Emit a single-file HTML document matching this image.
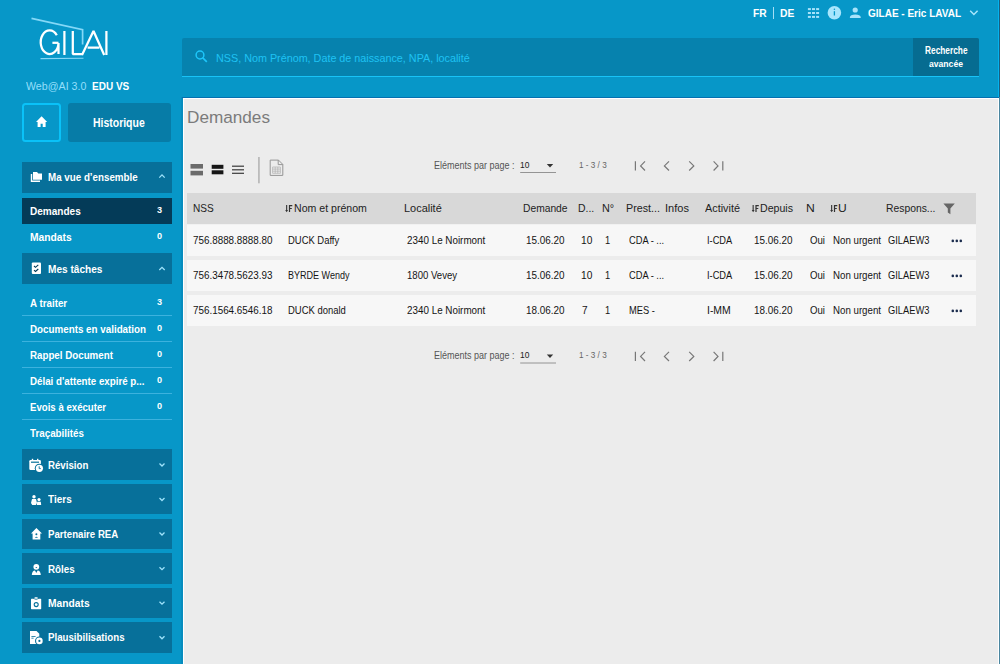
<!DOCTYPE html>
<html><head><meta charset="utf-8"><title>GILAI - Demandes</title>
<style>
*{margin:0;padding:0;box-sizing:border-box}
html,body{width:1000px;height:664px;overflow:hidden}
body{position:relative;background:#0797c8;font-family:"Liberation Sans",sans-serif}
.a{position:absolute}
.t{position:absolute;white-space:nowrap;line-height:1;transform-origin:0 0}
svg{position:absolute;overflow:visible}
</style></head><body>
<!-- content area -->
<div class="a" style="left:181px;top:97px;width:2px;height:567px;background:#078cbe"></div><div class="a" style="left:182px;top:97px;width:818px;height:1px;background:#0570b0"></div>
<div class="a" style="left:183px;top:98px;width:816px;height:566px;background:#fff"></div>
<div class="a" style="left:184px;top:99px;width:814px;height:565px;background:#ececec"></div>
<div class="a" style="left:998px;top:0;width:1px;height:97px;background:#05b2ee"></div>
<div class="a" style="left:999px;top:0;width:1px;height:97px;background:#1a5f80"></div><div class="a" style="left:999px;top:97px;width:1px;height:567px;background:#4a86a0"></div>

<!-- logo -->
<svg style="left:0;top:0" width="120" height="70" viewBox="0 0 120 70">
 <g fill="none" stroke="#84d8f7" stroke-width="1.7">
  <path d="M31.5 18.4 L82.6 29.7 L82.6 44.5"/>
 </g>
 <path d="M40.5 58.6 L83.5 58.3" fill="none" stroke="#86d8f6" stroke-width="1.1"/>
 <g fill="none" stroke="#fff" stroke-width="2.25" stroke-linejoin="bevel">
  <path d="M56.8 35.3 A8.9 11.8 0 1 0 58.5 43 V54"/>
  <path d="M52.4 42.8 H58.5"/>
  <path d="M64.4 31 V55"/>
  <path d="M72.8 31 V54 H82.6"/>
  <path d="M82 55 L93.5 31 L104.2 55 M87.6 47.6 H99.4"/>
  <path d="M106.4 31 V55"/>
 </g>
</svg>

<!-- home button -->
<div class="a" style="left:22px;top:103px;width:39px;height:39px;border:2px solid #0ac2f8;border-radius:3.5px"></div>
<svg style="left:0;top:0" width="60" height="140" viewBox="0 0 60 140"><path d="M41.6 116.3 L47.2 121.9 H45.6 V127 H42.7 V123.8 H40.6 V127 H37.6 V121.9 H36 Z" fill="#fff"/></svg>
<div class="a" style="left:68px;top:103px;width:103px;height:38.5px;background:#077ca7;border-radius:3px"></div>

<!-- sidebar sections -->
<div class="a" style="left:22px;top:161.5px;width:150px;height:31.3px;background:#07709a"></div>
<div class="a" style="left:22px;top:198px;width:150px;height:26px;background:#043b58"></div>
<div class="a" style="left:22px;top:253.4px;width:150px;height:30.8px;background:#07709a"></div>
<div class="a" style="left:22px;top:315px;width:150px;height:1px;background:#3cb2de"></div>
<div class="a" style="left:22px;top:341px;width:150px;height:1px;background:#3cb2de"></div>
<div class="a" style="left:22px;top:367px;width:150px;height:1px;background:#3cb2de"></div>
<div class="a" style="left:22px;top:393px;width:150px;height:1px;background:#3cb2de"></div>
<div class="a" style="left:22px;top:419px;width:150px;height:1px;background:#3cb2de"></div>
<div class="a" style="left:22px;top:449.4px;width:150px;height:30.4px;background:#07709a"></div>
<div class="a" style="left:22px;top:484px;width:150px;height:30.4px;background:#07709a"></div>
<div class="a" style="left:22px;top:518.6px;width:150px;height:30.4px;background:#07709a"></div>
<div class="a" style="left:22px;top:553.1px;width:150px;height:30.6px;background:#07709a"></div>
<div class="a" style="left:22px;top:587.6px;width:150px;height:30.4px;background:#07709a"></div>
<div class="a" style="left:22px;top:622.2px;width:150px;height:30.4px;background:#07709a"></div>

<!-- chevrons -->
<svg style="left:0;top:0" width="180" height="664" viewBox="0 0 180 664">
 <g fill="none" stroke="#9fe3fb" stroke-width="1.3">
  <path d="M159.3 177.6 L162 174.9 L164.7 177.6"/>
  <path d="M159.3 270 L162 267.3 L164.7 270"/>
  <path d="M159.5 463.5 L162 466 L164.5 463.5"/>
  <path d="M159.5 498 L162 500.5 L164.5 498"/>
  <path d="M159.5 532.5 L162 535 L164.5 532.5"/>
  <path d="M159.5 567.2 L162 569.7 L164.5 567.2"/>
  <path d="M159.5 601.7 L162 604.2 L164.5 601.7"/>
  <path d="M159.5 636.3 L162 638.8 L164.5 636.3"/>
 </g>
 <!-- folder -->
 <g fill="#fff">
  <path d="M30.8 174 H32.2 V180.6 H40 V182 H30.8 Z"/>
  <path d="M33 172 H37 L38.3 173.6 H42 V179.7 H33 Z"/>
 </g>
 <!-- checklist -->
 <rect x="31.8" y="262.6" width="9.2" height="11.4" rx="1" fill="#fff"/>
 <g fill="none" stroke="#043b58" stroke-width="1.1">
  <path d="M34 266 L35.5 267.3 L38.3 264.8"/>
  <path d="M34 270.2 L35.5 271.5 L38.3 269"/>
 </g>
 <!-- calendar -->
 <g fill="#fff">
  <rect x="29.3" y="460" width="11.6" height="10" rx="1.2"/>
  <rect x="31.8" y="458.8" width="1.4" height="2"/>
  <rect x="37" y="458.8" width="1.4" height="2"/>
 </g>
 <rect x="31" y="461.6" width="8" height="1.2" fill="#07709a"/>
 <circle cx="39.4" cy="468.3" r="4.6" fill="#07709a"/>
 <circle cx="39.4" cy="468.3" r="3.6" fill="#fff"/>
 <path d="M39.2 466.3 V468.6 H40.8" fill="none" stroke="#07709a" stroke-width="0.9"/>
 <!-- tiers -->
 <g fill="#fff">
  <circle cx="34" cy="496.8" r="1.7"/>
  <path d="M32 499 H36 L37 503 L35.8 505 H32.2 L31 503 Z"/>
  <circle cx="39" cy="499.6" r="1.6"/>
  <path d="M37.2 501.8 H40.8 L41.2 505 H36.8 Z"/>
 </g>
 <!-- house -->
 <path d="M36.4 528 L42 533.6 H40.3 V539.6 H32.6 V533.6 H31 Z" fill="#fff"/>
 <circle cx="36.4" cy="534.3" r="1" fill="#07709a"/>
 <path d="M34.8 537.8 Q36.4 535.5 38 537.8 Z" fill="#07709a"/>
 <!-- roles -->
 <circle cx="36.3" cy="566.8" r="2.9" fill="#fff"/>
 <path d="M35.3 567 H37.3 L36.3 568.2 Z" fill="#07709a"/>
 <path d="M31.8 575 Q32 570.6 35 570.4 L36.3 573 L37.6 570.4 Q40.6 570.6 40.8 575 Z" fill="#fff"/>
 <!-- clipboard -->
 <rect x="31" y="598.8" width="10.2" height="10.4" rx="0.6" fill="#fff"/>
 <path d="M33.5 598.8 L35 597.2 H37.2 L38.7 598.8 Z" fill="#fff"/>
 <path d="M33.2 598.3 Q36.1 600.8 39 598.3" fill="none" stroke="#07709a" stroke-width="0.7"/>
 <circle cx="36.2" cy="604.6" r="2" fill="none" stroke="#07709a" stroke-width="1.1"/>
 <!-- plausibilisations -->
 <path d="M30 631 H36.5 L39.3 633.8 V644 H30 Z" fill="#fff"/>
 <path d="M31.4 636.5 H35.6 M31.4 638.2 H33.6" stroke="#07709a" stroke-width="0.8"/>
 <circle cx="39.4" cy="640.9" r="4.4" fill="#07709a"/>
 <circle cx="39.4" cy="640.9" r="3.3" fill="#fff"/>
 <circle cx="39.4" cy="640.9" r="1.1" fill="#07709a"/>
</svg>

<!-- search bar -->
<div class="a" style="left:182px;top:37.5px;width:797px;height:38.5px;background:#0682ae;border-radius:2px 2px 0 0"></div>
<div class="a" style="left:913px;top:37.7px;width:65.6px;height:38px;background:#066c91;border-radius:0 2px 0 0"></div>
<div class="a" style="left:182px;top:75.5px;width:797px;height:1.6px;background:#18c3f7"></div>
<svg style="left:193.5px;top:48.7px" width="15" height="15" viewBox="0 0 15 15"><circle cx="6" cy="6" r="3.9" fill="none" stroke="#1ec6fa" stroke-width="1.5"/><path d="M8.8 8.8 L12.8 12.8" stroke="#1ec6fa" stroke-width="1.7"/></svg>

<!-- top right icons -->
<div class="a" style="left:773px;top:6.5px;width:1px;height:12.4px;background:#a4def5"></div>
<svg style="left:0;top:0" width="1000" height="30" viewBox="0 0 1000 30">
 <g fill="#a8e3fa">
  <rect x="807.9" y="8.1" width="3" height="2"/><rect x="812" y="8.1" width="3" height="2"/><rect x="816.1" y="8.1" width="3" height="2"/>
  <rect x="807.9" y="12" width="3" height="2"/><rect x="812" y="12" width="3" height="2"/><rect x="816.1" y="12" width="3" height="2"/>
  <rect x="807.9" y="15.9" width="3" height="2"/><rect x="812" y="15.9" width="3" height="2"/><rect x="816.1" y="15.9" width="3" height="2"/>
 </g>
 <circle cx="834.4" cy="12.7" r="6.8" fill="#a8e6fd"/>
 <rect x="833.75" y="11.2" width="1.3" height="4.3" fill="#0797c8"/>
 <circle cx="834.4" cy="9.3" r="0.8" fill="#0797c8"/>
 <g fill="#a8e3fa">
  <circle cx="855.2" cy="10" r="2.6"/>
  <path d="M849.9 18.1 V17 Q850.2 14.5 855.3 14.5 Q860.4 14.5 860.7 17 V18.1 Z"/>
 </g>
 <path d="M970.2 10.8 L973.9 14.5 L977.6 10.8" fill="none" stroke="#a8e6fc" stroke-width="1.5"/>
</svg>

<!-- toolbar -->
<svg style="left:0;top:0" width="1000" height="664" viewBox="0 0 1000 664">
 <rect x="190.5" y="164" width="12.5" height="4.6" fill="#6b6b6b"/>
 <rect x="190.5" y="170.8" width="12.5" height="4.6" fill="#6b6b6b"/>
 <rect x="211.7" y="164.8" width="11.7" height="4" fill="#161616"/>
 <rect x="211.7" y="170.3" width="11.7" height="4" fill="#161616"/>
 <rect x="232" y="165.6" width="12" height="1.2" fill="#3a3a3a"/>
 <rect x="232" y="169.2" width="12" height="1.2" fill="#3a3a3a"/>
 <rect x="232" y="172.7" width="12" height="1.2" fill="#3a3a3a"/>
 <rect x="258.5" y="157" width="0.9" height="26.3" fill="#8a8a8a"/>
 <path d="M270.2 160.1 H278.5 L282.8 164.4 V175.4 H270.2 Z M278.2 160.1 V164.6 H282.8" fill="none" stroke="#959595" stroke-width="1"/>
 <path d="M272.6 167 H280.4 V173.3 H272.6 Z M272.6 169.1 H280.4 M272.6 171.2 H280.4 M275.2 167 V173.3 M277.8 167 V173.3" fill="none" stroke="#b0b0b0" stroke-width="0.7"/>
</svg>

<!-- paginators -->
<svg style="left:0;top:0" width="1000" height="664" viewBox="0 0 1000 664">
 <g>
 <path d="M520.2 172.5 H556" stroke="#8a8a8a" stroke-width="0.9"/>
 <path d="M546.8 164 H553.2 L550 167.5 Z" fill="#333"/>
 <g fill="none" stroke="#777" stroke-width="1.2">
  <path d="M635.4 161.3 V170.5 M645 161.3 L640.6 165.9 L645 170.5"/>
  <path d="M669 161.3 L664.4 165.9 L669 170.5"/>
  <path d="M689.2 161.3 L693.8 165.9 L689.2 170.5"/>
  <path d="M713.6 161.3 L718 165.9 L713.6 170.5 M722.8 161.3 V170.5"/>
 </g>
 </g>
 <g transform="translate(0 190.5)">
 <path d="M520.2 172.5 H556" stroke="#8a8a8a" stroke-width="0.9"/>
 <path d="M546.8 164 H553.2 L550 167.5 Z" fill="#333"/>
 <g fill="none" stroke="#777" stroke-width="1.2">
  <path d="M635.4 161.3 V170.5 M645 161.3 L640.6 165.9 L645 170.5"/>
  <path d="M669 161.3 L664.4 165.9 L669 170.5"/>
  <path d="M689.2 161.3 L693.8 165.9 L689.2 170.5"/>
  <path d="M713.6 161.3 L718 165.9 L713.6 170.5 M722.8 161.3 V170.5"/>
 </g>
 </g>

</svg>

<!-- table -->
<div class="a" style="left:186.5px;top:193px;width:789.5px;height:33px;background:#f1f1f1"></div><div class="a" style="left:186.5px;top:193px;width:789.5px;height:31.3px;background:#d8d8d8"></div>
<div class="a" style="left:186.5px;top:225.3px;width:789.5px;height:30.6px;background:#f7f7f7"></div>
<div class="a" style="left:186.5px;top:260px;width:789.5px;height:30.5px;background:#f7f7f7"></div>
<div class="a" style="left:186.5px;top:294.6px;width:789.5px;height:31.2px;background:#f7f7f7"></div>
<svg style="left:0;top:0" width="1000" height="664" viewBox="0 0 1000 664">
 <g fill="#333">
  <path d="M286.1 205 H287.2 V210.4 H286.1 Z M285.2 209.9 H288.1 L286.65 212.2 Z"/>
  <path d="M288.9 205 H292.3 V206.2 H290.1 V208 H291.8 V209.1 H290.1 V212 H288.9 Z"/>
 </g>
 <g fill="#333" transform="translate(466.5 0)">
  <path d="M286.1 205 H287.2 V210.4 H286.1 Z M285.2 209.9 H288.1 L286.65 212.2 Z"/>
  <path d="M288.9 205 H292.3 V206.2 H290.1 V208 H291.8 V209.1 H290.1 V212 H288.9 Z"/>
 </g>
 <g fill="#333" transform="translate(545 0)">
  <path d="M286.1 205 H287.2 V210.4 H286.1 Z M285.2 209.9 H288.1 L286.65 212.2 Z"/>
  <path d="M288.9 205 H292.3 V206.2 H290.1 V208 H291.8 V209.1 H290.1 V212 H288.9 Z"/>
 </g>
 <path d="M943.4 203.4 H954.8 L950.4 208.6 V214.2 L947.8 212.4 V208.6 Z" fill="#666"/>
 <g fill="#1a2b4d">
  <circle cx="952.8" cy="240.9" r="1.3"/><circle cx="956.8" cy="240.9" r="1.3"/><circle cx="960.8" cy="240.9" r="1.3"/>
  <circle cx="952.8" cy="275.9" r="1.3"/><circle cx="956.8" cy="275.9" r="1.3"/><circle cx="960.8" cy="275.9" r="1.3"/>
  <circle cx="952.8" cy="310.9" r="1.3"/><circle cx="956.8" cy="310.9" r="1.3"/><circle cx="960.8" cy="310.9" r="1.3"/>
 </g>
</svg>
<div class="t" id="t0" style="left:753.42px;top:7.93px;font-size:11.30px;font-weight:700;color:#ffffff;transform:scaleX(0.9071);">FR</div>
<div class="t" id="t1" style="left:780.12px;top:7.93px;font-size:11.30px;font-weight:700;color:#ffffff;transform:scaleX(0.9085);">DE</div>
<div class="t" id="t2" style="left:868.06px;top:7.93px;font-size:11.30px;font-weight:700;color:#ffffff;transform:scaleX(0.8854);">GILAE - Eric LAVAL</div>
<div class="t" id="t3" style="left:215.57px;top:52.69px;font-size:11.00px;font-weight:400;color:#1fc3f4;transform:scaleX(0.9796);">NSS, Nom Prénom, Date de naissance, NPA, localité</div>
<div class="t" id="t4" style="left:924.58px;top:45.53px;font-size:10.00px;font-weight:700;color:#ffffff;transform:scaleX(0.8317);">Recherche</div>
<div class="t" id="t5" style="left:928.78px;top:58.70px;font-size:9.80px;font-weight:700;color:#ffffff;transform:scaleX(0.8784);">avancée</div>
<div class="t" id="t6" style="left:25.60px;top:80.52px;font-size:11.20px;font-weight:400;color:#94dffb;transform:scaleX(0.9524);">Web@AI 3.0</div>
<div class="t" id="t7" style="left:92.13px;top:80.52px;font-size:11.20px;font-weight:700;color:#ffffff;transform:scaleX(0.8938);">EDU VS</div>
<div class="t" id="t8" style="left:93.36px;top:116.99px;font-size:12.30px;font-weight:700;color:#ffffff;transform:scaleX(0.8502);">Historique</div>
<div class="t" id="t9" style="left:48.17px;top:170.78px;font-size:11.60px;font-weight:700;color:#ffffff;transform:scaleX(0.8437);">Ma vue d’ensemble</div>
<div class="t" id="t10" style="left:29.85px;top:205.08px;font-size:11.60px;font-weight:700;color:#ffffff;transform:scaleX(0.8661);">Demandes</div>
<div class="t" id="t11" style="left:156.54px;top:206.23px;font-size:8.70px;font-weight:700;color:#ffffff;transform:scaleX(1.0500);">3</div>
<div class="t" id="t12" style="left:29.83px;top:231.08px;font-size:11.60px;font-weight:700;color:#ffffff;transform:scaleX(0.8870);">Mandats</div>
<div class="t" id="t13" style="left:156.54px;top:232.23px;font-size:8.70px;font-weight:700;color:#ffffff;transform:scaleX(1.0500);">0</div>
<div class="t" id="t14" style="left:48.15px;top:263.38px;font-size:11.60px;font-weight:700;color:#ffffff;transform:scaleX(0.8715);">Mes tâches</div>
<div class="t" id="t15" style="left:30.29px;top:296.88px;font-size:11.60px;font-weight:700;color:#ffffff;transform:scaleX(0.8434);">A traiter</div>
<div class="t" id="t16" style="left:156.74px;top:298.13px;font-size:8.70px;font-weight:700;color:#ffffff;transform:scaleX(1.0500);">3</div>
<div class="t" id="t17" style="left:29.87px;top:323.18px;font-size:11.60px;font-weight:700;color:#ffffff;transform:scaleX(0.8457);">Documents en validation</div>
<div class="t" id="t18" style="left:156.74px;top:324.13px;font-size:8.70px;font-weight:700;color:#ffffff;transform:scaleX(1.0500);">0</div>
<div class="t" id="t19" style="left:29.97px;top:349.18px;font-size:11.60px;font-weight:700;color:#ffffff;transform:scaleX(0.8409);">Rappel Document</div>
<div class="t" id="t20" style="left:156.74px;top:350.13px;font-size:8.70px;font-weight:700;color:#ffffff;transform:scaleX(1.0500);">0</div>
<div class="t" id="t21" style="left:29.97px;top:375.18px;font-size:11.60px;font-weight:700;color:#ffffff;transform:scaleX(0.8408);">Délai d&#x27;attente expiré p...</div>
<div class="t" id="t22" style="left:156.74px;top:376.13px;font-size:8.70px;font-weight:700;color:#ffffff;transform:scaleX(1.0500);">0</div>
<div class="t" id="t23" style="left:29.98px;top:401.18px;font-size:11.60px;font-weight:700;color:#ffffff;transform:scaleX(0.8309);">Evois à exécuter</div>
<div class="t" id="t24" style="left:156.74px;top:402.13px;font-size:8.70px;font-weight:700;color:#ffffff;transform:scaleX(1.0500);">0</div>
<div class="t" id="t25" style="left:29.90px;top:427.18px;font-size:11.60px;font-weight:700;color:#ffffff;transform:scaleX(0.8457);">Traçabilités</div>
<div class="t" id="t26" style="left:48.07px;top:458.78px;font-size:11.60px;font-weight:700;color:#ffffff;transform:scaleX(0.8340);">Révision</div>
<div class="t" id="t27" style="left:48.20px;top:493.38px;font-size:11.60px;font-weight:700;color:#ffffff;transform:scaleX(0.8624);">Tiers</div>
<div class="t" id="t28" style="left:48.08px;top:527.68px;font-size:11.60px;font-weight:700;color:#ffffff;transform:scaleX(0.8323);">Partenaire REA</div>
<div class="t" id="t29" style="left:48.07px;top:562.88px;font-size:11.60px;font-weight:700;color:#ffffff;transform:scaleX(0.8459);">Rôles</div>
<div class="t" id="t30" style="left:48.04px;top:597.08px;font-size:11.60px;font-weight:700;color:#ffffff;transform:scaleX(0.8848);">Mandats</div>
<div class="t" id="t31" style="left:48.07px;top:631.08px;font-size:11.60px;font-weight:700;color:#ffffff;transform:scaleX(0.8365);">Plausibilisations</div>
<div class="t" id="t32" style="left:187.15px;top:108.84px;font-size:17.20px;font-weight:400;color:#7b7b7b;transform:scaleX(0.9982);">Demandes</div>
<div class="t" id="t33" style="left:434.37px;top:159.54px;font-size:10.70px;font-weight:400;color:#555555;transform:scaleX(0.8415);">Eléments par page :</div>
<div class="t" id="t34" style="left:519.55px;top:159.90px;font-size:9.80px;font-weight:400;color:#222222;transform:scaleX(0.8615);">10</div>
<div class="t" id="t35" style="left:579.14px;top:160.55px;font-size:8.80px;font-weight:400;color:#666666;transform:scaleX(0.9276);">1 - 3 / 3</div>
<div class="t" id="t36" style="left:434.37px;top:350.04px;font-size:10.70px;font-weight:400;color:#555555;transform:scaleX(0.8415);">Eléments par page :</div>
<div class="t" id="t37" style="left:519.55px;top:350.40px;font-size:9.80px;font-weight:400;color:#222222;transform:scaleX(0.8615);">10</div>
<div class="t" id="t38" style="left:579.14px;top:351.05px;font-size:8.80px;font-weight:400;color:#666666;transform:scaleX(0.9276);">1 - 3 / 3</div>
<div class="t" id="t39" style="left:192.75px;top:201.98px;font-size:11.60px;font-weight:400;color:#222222;transform:scaleX(0.8703);">NSS</div>
<div class="t" id="t40" style="left:293.72px;top:201.98px;font-size:11.60px;font-weight:400;color:#222222;transform:scaleX(0.9121);">Nom et prénom</div>
<div class="t" id="t41" style="left:403.69px;top:201.98px;font-size:11.60px;font-weight:400;color:#222222;transform:scaleX(0.9445);">Localité</div>
<div class="t" id="t42" style="left:522.94px;top:201.98px;font-size:11.60px;font-weight:400;color:#222222;transform:scaleX(0.8857);">Demande</div>
<div class="t" id="t43" style="left:578.33px;top:201.98px;font-size:11.60px;font-weight:400;color:#222222;transform:scaleX(0.8985);">D...</div>
<div class="t" id="t44" style="left:602.30px;top:201.98px;font-size:11.60px;font-weight:400;color:#222222;transform:scaleX(0.9362);">N°</div>
<div class="t" id="t45" style="left:626.31px;top:201.98px;font-size:11.60px;font-weight:400;color:#222222;transform:scaleX(0.9257);">Prest...</div>
<div class="t" id="t46" style="left:665.45px;top:201.98px;font-size:11.60px;font-weight:400;color:#222222;transform:scaleX(0.9516);">Infos</div>
<div class="t" id="t47" style="left:705.00px;top:201.98px;font-size:11.60px;font-weight:400;color:#222222;transform:scaleX(0.9351);">Activité</div>
<div class="t" id="t48" style="left:759.71px;top:201.98px;font-size:11.60px;font-weight:400;color:#222222;transform:scaleX(0.9143);">Depuis</div>
<div class="t" id="t49" style="left:806.21px;top:201.98px;font-size:11.60px;font-weight:400;color:#222222;transform:scaleX(1.0500);">N</div>
<div class="t" id="t50" style="left:838.22px;top:201.98px;font-size:11.60px;font-weight:400;color:#222222;transform:scaleX(1.0370);">U</div>
<div class="t" id="t51" style="left:885.53px;top:201.98px;font-size:11.60px;font-weight:400;color:#222222;transform:scaleX(0.8930);">Respons...</div>
<div class="t" id="t52" style="left:192.95px;top:234.99px;font-size:11.00px;font-weight:400;color:#141414;transform:scaleX(0.8957);">756.8888.8888.80</div>
<div class="t" id="t53" style="left:287.76px;top:234.99px;font-size:11.00px;font-weight:400;color:#141414;transform:scaleX(0.8576);">DUCK Daffy</div>
<div class="t" id="t54" style="left:406.95px;top:234.99px;font-size:11.00px;font-weight:400;color:#141414;transform:scaleX(0.8954);">2340 Le Noirmont</div>
<div class="t" id="t55" style="left:525.72px;top:234.99px;font-size:11.00px;font-weight:400;color:#141414;transform:scaleX(0.9006);">15.06.20</div>
<div class="t" id="t56" style="left:581.31px;top:234.99px;font-size:11.00px;font-weight:400;color:#141414;transform:scaleX(0.9244);">10</div>
<div class="t" id="t57" style="left:605.36px;top:234.99px;font-size:11.00px;font-weight:400;color:#141414;transform:scaleX(0.8500);">1</div>
<div class="t" id="t58" style="left:629.18px;top:234.99px;font-size:11.00px;font-weight:400;color:#141414;transform:scaleX(0.8447);">CDA - ...</div>
<div class="t" id="t59" style="left:706.96px;top:234.99px;font-size:11.00px;font-weight:400;color:#141414;transform:scaleX(0.8414);">I-CDA</div>
<div class="t" id="t60" style="left:754.32px;top:234.99px;font-size:11.00px;font-weight:400;color:#141414;transform:scaleX(0.9006);">15.06.20</div>
<div class="t" id="t61" style="left:809.56px;top:234.99px;font-size:11.00px;font-weight:400;color:#141414;transform:scaleX(0.8750);">Oui</div>
<div class="t" id="t62" style="left:832.94px;top:234.99px;font-size:11.00px;font-weight:400;color:#141414;transform:scaleX(0.8819);">Non urgent</div>
<div class="t" id="t63" style="left:888.38px;top:234.99px;font-size:11.00px;font-weight:400;color:#141414;transform:scaleX(0.8458);">GILAEW3</div>
<div class="t" id="t64" style="left:192.95px;top:269.99px;font-size:11.00px;font-weight:400;color:#141414;transform:scaleX(0.8957);">756.3478.5623.93</div>
<div class="t" id="t65" style="left:287.78px;top:269.99px;font-size:11.00px;font-weight:400;color:#141414;transform:scaleX(0.8202);">BYRDE Wendy</div>
<div class="t" id="t66" style="left:406.75px;top:269.99px;font-size:11.00px;font-weight:400;color:#141414;transform:scaleX(0.8705);">1800 Vevey</div>
<div class="t" id="t67" style="left:525.72px;top:269.99px;font-size:11.00px;font-weight:400;color:#141414;transform:scaleX(0.9006);">15.06.20</div>
<div class="t" id="t68" style="left:581.31px;top:269.99px;font-size:11.00px;font-weight:400;color:#141414;transform:scaleX(0.9244);">10</div>
<div class="t" id="t69" style="left:605.36px;top:269.99px;font-size:11.00px;font-weight:400;color:#141414;transform:scaleX(0.8500);">1</div>
<div class="t" id="t70" style="left:629.18px;top:269.99px;font-size:11.00px;font-weight:400;color:#141414;transform:scaleX(0.8447);">CDA - ...</div>
<div class="t" id="t71" style="left:706.96px;top:269.99px;font-size:11.00px;font-weight:400;color:#141414;transform:scaleX(0.8414);">I-CDA</div>
<div class="t" id="t72" style="left:754.32px;top:269.99px;font-size:11.00px;font-weight:400;color:#141414;transform:scaleX(0.9006);">15.06.20</div>
<div class="t" id="t73" style="left:809.56px;top:269.99px;font-size:11.00px;font-weight:400;color:#141414;transform:scaleX(0.8750);">Oui</div>
<div class="t" id="t74" style="left:832.94px;top:269.99px;font-size:11.00px;font-weight:400;color:#141414;transform:scaleX(0.8819);">Non urgent</div>
<div class="t" id="t75" style="left:888.38px;top:269.99px;font-size:11.00px;font-weight:400;color:#141414;transform:scaleX(0.8458);">GILAEW3</div>
<div class="t" id="t76" style="left:192.95px;top:305.09px;font-size:11.00px;font-weight:400;color:#141414;transform:scaleX(0.8957);">756.1564.6546.18</div>
<div class="t" id="t77" style="left:287.76px;top:305.09px;font-size:11.00px;font-weight:400;color:#141414;transform:scaleX(0.8591);">DUCK donald</div>
<div class="t" id="t78" style="left:406.95px;top:305.09px;font-size:11.00px;font-weight:400;color:#141414;transform:scaleX(0.8954);">2340 Le Noirmont</div>
<div class="t" id="t79" style="left:525.72px;top:305.09px;font-size:11.00px;font-weight:400;color:#141414;transform:scaleX(0.9006);">18.06.20</div>
<div class="t" id="t80" style="left:581.54px;top:305.09px;font-size:11.00px;font-weight:400;color:#141414;transform:scaleX(0.9143);">7</div>
<div class="t" id="t81" style="left:605.36px;top:305.09px;font-size:11.00px;font-weight:400;color:#141414;transform:scaleX(0.8500);">1</div>
<div class="t" id="t82" style="left:628.96px;top:305.09px;font-size:11.00px;font-weight:400;color:#141414;transform:scaleX(0.8475);">MES -</div>
<div class="t" id="t83" style="left:706.85px;top:305.09px;font-size:11.00px;font-weight:400;color:#141414;transform:scaleX(0.9462);">I-MM</div>
<div class="t" id="t84" style="left:754.32px;top:305.09px;font-size:11.00px;font-weight:400;color:#141414;transform:scaleX(0.9006);">18.06.20</div>
<div class="t" id="t85" style="left:809.56px;top:305.09px;font-size:11.00px;font-weight:400;color:#141414;transform:scaleX(0.8750);">Oui</div>
<div class="t" id="t86" style="left:832.94px;top:305.09px;font-size:11.00px;font-weight:400;color:#141414;transform:scaleX(0.8819);">Non urgent</div>
<div class="t" id="t87" style="left:888.38px;top:305.09px;font-size:11.00px;font-weight:400;color:#141414;transform:scaleX(0.8458);">GILAEW3</div>
</body></html>
